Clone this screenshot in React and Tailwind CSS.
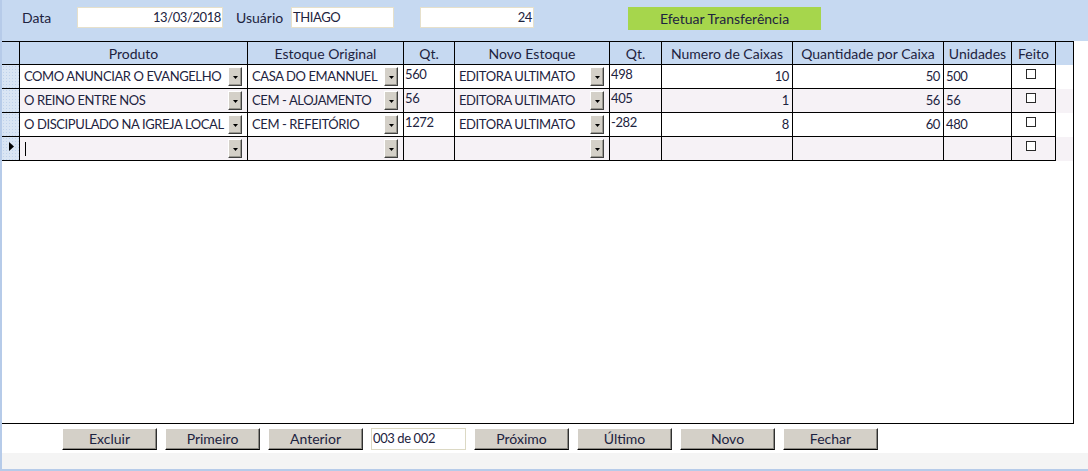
const FONT = "font-['Lato','Liberation_Sans',sans-serif]"
// valores (maiúsculas e números) um pouco mais estreitos que os rótulos
const VAL = 'text-[13px] tracking-[-0.4px]'

const rows = [
  { produto: 'COMO ANUNCIAR O EVANGELHO', origem: 'CASA DO EMANNUEL', qt: '560', destino: 'EDITORA ULTIMATO', qt2: '498', caixas: '10', porCaixa: '50', unidades: '500' },
  { produto: 'O REINO ENTRE NOS', origem: 'CEM - ALOJAMENTO', qt: '56', destino: 'EDITORA ULTIMATO', qt2: '405', caixas: '1', porCaixa: '56', unidades: '56' },
  { produto: 'O DISCIPULADO NA IGREJA LOCAL', origem: 'CEM - REFEITÓRIO', qt: '1272', destino: 'EDITORA ULTIMATO', qt2: '-282', caixas: '8', porCaixa: '60', unidades: '480' },
  { novo: true, produto: '', origem: '', qt: '', destino: '', qt2: '', caixas: '', porCaixa: '', unidades: '' },
]

function DropButton() {
  return (
    <div className="w-[14px] h-[19px] shrink-0 mr-[5px] bg-[#d4d0c8] border-t border-l border-white border-r border-b border-r-[#404040] border-b-[#404040] shadow-[inset_-1px_-1px_#9a9890] flex items-center justify-center pt-[2px]">
      <svg width="5" height="3" viewBox="0 0 5 3">
        <polygon points="0,0 5,0 2.5,3" fill="#000" />
      </svg>
    </div>
  )
}

function ComboCell({ w, text, cursor }) {
  return (
    <div className={`${w} shrink-0 h-full border-r border-b border-black flex items-center`}>
      <div className={`flex-1 min-w-0 overflow-hidden whitespace-nowrap pl-[4px] flex items-center ${VAL}`}>
        {cursor && <span className="inline-block w-px h-[14px] bg-black ml-px" />}
        {text}
      </div>
      <DropButton />
    </div>
  )
}

function TextCell({ w, text, align = 'left', top = 'pt-[2px]', pad = 'pl-[2px]' }) {
  return (
    <div className={`${w} shrink-0 h-full border-r border-b border-black whitespace-nowrap overflow-hidden ${VAL} ${top} ${align === 'right' ? 'text-right pr-[3px]' : pad}`}>
      {text}
    </div>
  )
}

function NavButton({ children }) {
  return (
    <button className="w-[95px] h-[22px] bg-[#d4d0c8] border-t border-l border-white border-r border-b border-r-[#303030] border-b-[#000] shadow-[inset_-1px_-1px_#8c8a84] text-[#1d2340] text-[14px] leading-none flex items-center justify-center">
      {children}
    </button>
  )
}

export default function App() {
  return (
    <div className={`w-[1088px] h-[471px] flex flex-col bg-white border-l-2 border-[#b6cbe9] text-[#1d2340] text-[14px] ${FONT}`}>
      {/* cabeçalho */}
      <div className="h-[41px] shrink-0 bg-[#c6d9f1] flex items-start pt-[7px]">
        <div className="ml-[20px] w-[55px] h-[21px] flex items-center">Data</div>
        <div className={`w-[146px] h-[21px] bg-white border border-[#e6e0cb] flex items-center justify-end pr-[1px] ${VAL}`}>13/03/2018</div>
        <div className="ml-[13px] w-[55px] h-[21px] flex items-center">Usuário</div>
        <div className={`w-[103px] h-[21px] bg-white border border-[#e6e0cb] flex items-center pl-[1px] ${VAL}`}>THIAGO</div>
        <div className={`ml-[26px] w-[114px] h-[21px] bg-white border border-[#e6e0cb] flex items-center justify-end pr-[1px] ${VAL}`}>24</div>
        <div className="ml-[94px] w-[193px] h-[23px] bg-[#a6d64c] flex items-center justify-center">Efetuar Transferência</div>
      </div>

      {/* subformulário */}
      <div className="w-[1072px] h-[383px] shrink-0 border-t border-r border-b border-black flex flex-col">
        <div className="h-[23px] shrink-0 flex bg-[#c6d9f1]">
          <div className="w-[18px] shrink-0 border-r border-b border-black" />
          {[
            ['Produto', 'w-[228px]'],
            ['Estoque Original', 'w-[156px]'],
            ['Qt.', 'w-[51px]'],
            ['Novo Estoque', 'w-[155px]'],
            ['Qt.', 'w-[52px]'],
            ['Numero de Caixas', 'w-[131px]'],
            ['Quantidade por Caixa', 'w-[151px]'],
            ['Unidades', 'w-[68px]'],
            ['Feito', 'w-[44px]'],
          ].map(([label, w], i) => (
            <div key={i} className={`${w} shrink-0 border-r border-b border-black flex items-center justify-center whitespace-nowrap`}>
              {label}
            </div>
          ))}
          <div className="flex-1" />
        </div>

        {rows.map((r, idx) => (
          <div key={idx} className={`h-[24px] shrink-0 flex ${idx % 2 === 1 ? 'bg-[#f6f2f6]' : 'bg-white'}`}>
            <div className="w-[18px] shrink-0 border-r border-b border-black bg-[#d9e5f4] bg-[radial-gradient(#bfd2ec_1px,transparent_1px)] bg-[length:3px_3px] flex items-start pl-[7px] pt-[5px]">
              {r.novo && (
                <svg width="5" height="9" viewBox="0 0 5 9">
                  <polygon points="0,0 5,4.5 0,9" fill="#000" />
                </svg>
              )}
            </div>
            <ComboCell w="w-[228px]" text={r.produto} cursor={r.novo} />
            <ComboCell w="w-[156px]" text={r.origem} />
            <TextCell w="w-[51px]" text={r.qt} top="pt-0" pad="pl-px" />
            <ComboCell w="w-[155px]" text={r.destino} />
            <TextCell w="w-[52px]" text={r.qt2} top="pt-0" pad="pl-px" />
            <TextCell w="w-[131px]" text={r.caixas} align="right" />
            <TextCell w="w-[151px]" text={r.porCaixa} align="right" />
            <TextCell w="w-[68px]" text={r.unidades} />
            <div className="w-[44px] shrink-0 h-full border-r border-b border-black pt-[4px] pl-[14px]">
              <div className="w-[10px] h-[10px] border border-[#2a2a2a] bg-white" />
            </div>
            <div className="flex-1" />
          </div>
        ))}
      </div>

      {/* navegação */}
      <div className="h-[29px] shrink-0 flex items-start pt-[4px] pl-[60px] gap-[8px]">
        <NavButton>Excluir</NavButton>
        <NavButton>Primeiro</NavButton>
        <NavButton>Anterior</NavButton>
        <div className={`w-[95px] h-[22px] bg-white border border-[#dcd9c4] pl-px pt-[1px] leading-[16px] ${VAL}`}>003 de 002</div>
        <NavButton>Próximo</NavButton>
        <NavButton>Último</NavButton>
        <NavButton>Novo</NavButton>
        <NavButton>Fechar</NavButton>
      </div>
      <div className="h-[16px] shrink-0 bg-[#f4f4f4]" />
      <div className="h-[2px] shrink-0 bg-[#b6cbe9]" />
    </div>
  )
}
